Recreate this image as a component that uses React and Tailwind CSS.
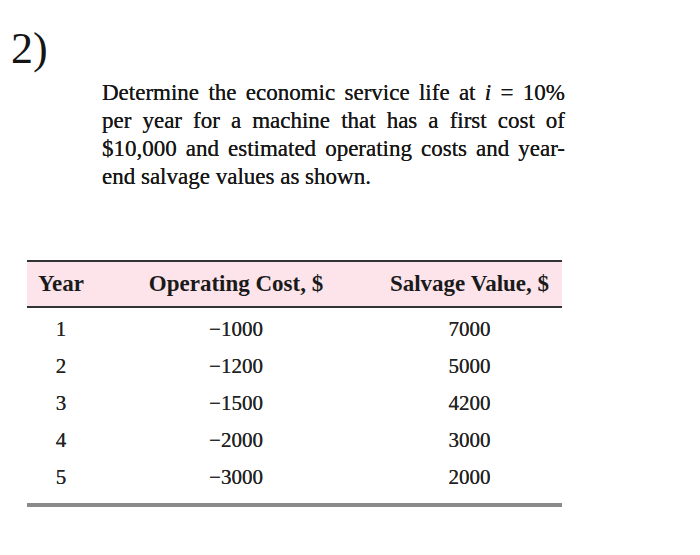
const rows = [
  { year: '1', cost: '−1000', salvage: '7000' },
  { year: '2', cost: '−1200', salvage: '5000' },
  { year: '3', cost: '−1500', salvage: '4200' },
  { year: '4', cost: '−2000', salvage: '3000' },
  { year: '5', cost: '−3000', salvage: '2000' },
];

export default function App() {
  return (
    <div className="w-[700px] h-[555px] bg-white text-[#151515] font-['Liberation_Serif','Times_New_Roman',serif] overflow-hidden">
      <div className="pt-[27px] pl-[11px] text-[44px] leading-[43px]">2)</div>

      <div className="mt-[9px] ml-[102px] w-[463px] text-[23px] leading-[28px] text-[#161616] [text-shadow:0_0_0.5px_#222]">
        <div className="text-justify [text-align-last:justify]">
          Determine the economic service life at <i>i</i> = 10%
        </div>
        <div className="text-justify [text-align-last:justify]">
          per year for a machine that has a first cost of
        </div>
        <div className="text-justify [text-align-last:justify]">
          $10,000 and estimated operating costs and year-
        </div>
        <div>end salvage values as shown.</div>
      </div>

      <div className="mt-[69px] ml-[27px] w-[535px]">
        <div className="grid grid-cols-[68px_282px_185px] h-[48px] items-center bg-[#fde4eb] border-t-2 border-b-2 border-[#333] text-[23px] font-bold text-[#1a1a1a]">
          <div className="text-center">Year</div>
          <div className="text-center">Operating Cost, $</div>
          <div className="text-center">Salvage Value, $</div>
        </div>
        <div className="pt-[3px] pb-[7px] border-b-4 border-[#8a8a8a] text-[21px] text-[#222] [text-shadow:0_0_0.4px_#333]">
          {rows.map((r) => (
            <div key={r.year} className="grid grid-cols-[68px_282px_185px] h-[37px] items-center">
              <div className="text-center">{r.year}</div>
              <div className="text-center">{r.cost}</div>
              <div className="text-center">{r.salvage}</div>
            </div>
          ))}
        </div>
      </div>
    </div>
  );
}
